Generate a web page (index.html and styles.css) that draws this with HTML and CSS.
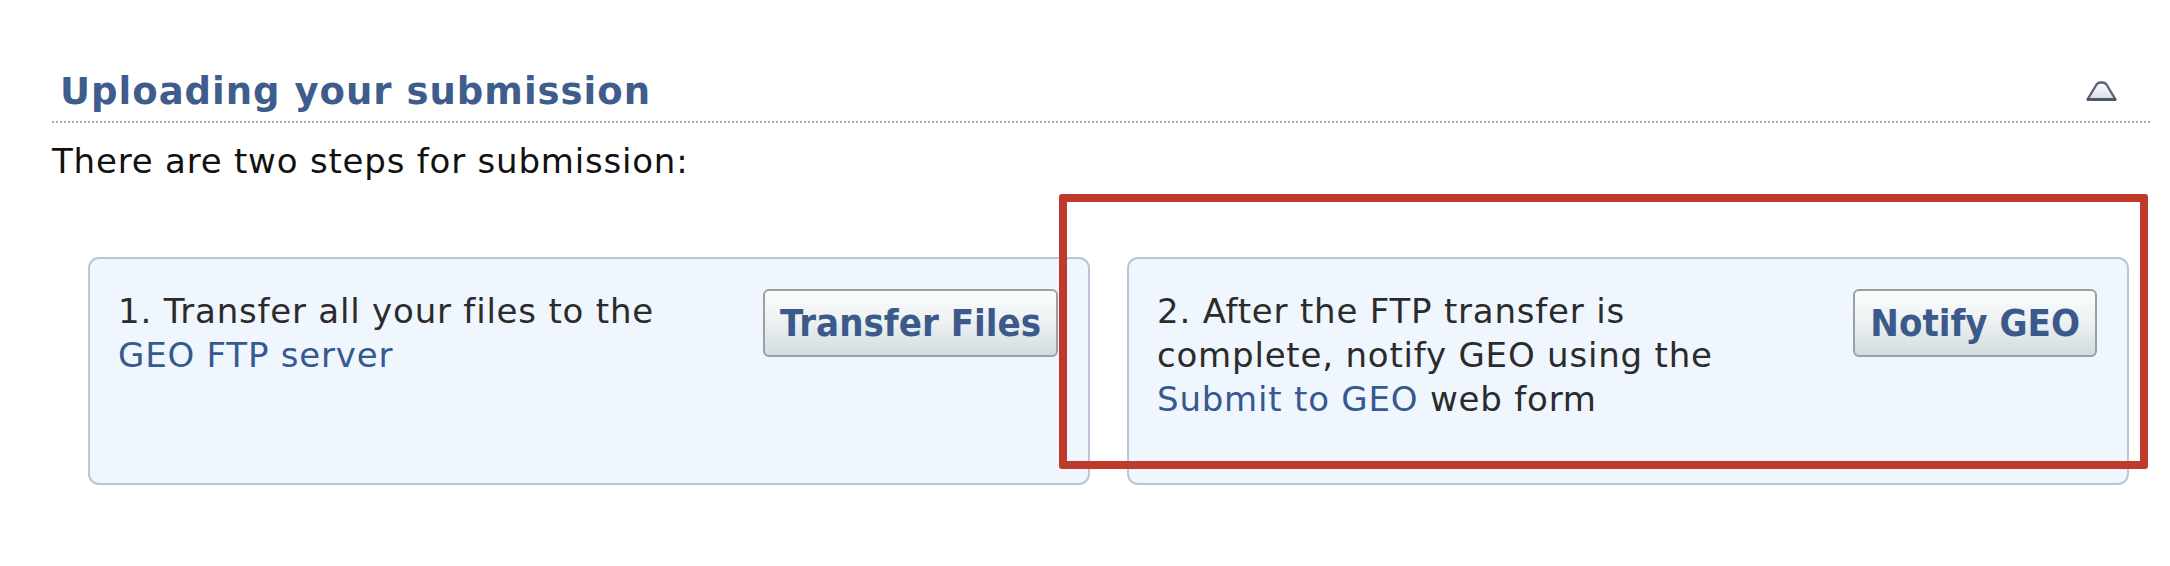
FILE: index.html
```html
<!DOCTYPE html>
<html>
<head>
<meta charset="utf-8">
<link rel="stylesheet" href="styles.css">
</head>
<body>
<div class="page">
  <div class="section-head">
    <h2 class="section-title">Uploading your submission</h2>
    <span class="collapse-icon" aria-hidden="true">
      <svg width="32" height="22" viewBox="0 0 32 22">
        <defs>
          <linearGradient id="tg" x1="0" y1="0" x2="0" y2="1">
            <stop offset="0" stop-color="#ffffff"/>
            <stop offset="1" stop-color="#d6dde8"/>
          </linearGradient>
        </defs>
        <path d="M2.5 19.5 L11.5 4.5 Q13 2.5 15.5 2.5 L17.5 2.5 Q20 2.5 21.5 4.5 L30.5 19.5 Z" fill="url(#tg)" stroke="#5b6475" stroke-width="2.4" stroke-linejoin="round"/>
        <line x1="2" y1="19.5" x2="31" y2="19.5" stroke="#4a5263" stroke-width="2.6"/>
      </svg>
    </span>
  </div>
  <p class="intro">There are two steps for submission:</p>
  <div class="steps">
    <div class="step">
      <div class="step-text">1. Transfer all your files to the <a class="link" href="#">GEO FTP server</a></div>
      <button class="step-btn" type="button">Transfer Files</button>
    </div>
    <div class="step">
      <div class="step-text">2. After the FTP transfer is complete, notify GEO using the <a class="link" href="#">Submit to GEO</a> web form</div>
      <button class="step-btn" type="button">Notify GEO</button>
    </div>
    <div class="highlight"></div>
  </div>
</div>
</body>
</html>
```

FILE: styles.css
```css
html, body {
  margin: 0;
  padding: 0;
  background: #ffffff;
}

body {
  font-family: "DejaVu Sans", Verdana, sans-serif;
  color: #1a1a1a;
}

.page {
  padding: 70px 20px 0 52px;
}

.section-head {
  display: flex;
  justify-content: space-between;
  align-items: flex-start;
  border-bottom: 2px dotted #a9a9a9;
  padding-bottom: 7px;
}

.section-title {
  margin: 0;
  padding-left: 8px;
  font-size: 37px;
  line-height: 44px;
  letter-spacing: 1px;
  font-weight: bold;
  color: #3f5d8c;
}

.collapse-icon {
  display: block;
  margin-top: 10px;
  margin-right: 33px;
  height: 22px;
}

.collapse-icon svg {
  display: block;
}

.intro {
  margin: 16px 0 0 0;
  font-size: 34px;
  line-height: 44px;
  letter-spacing: 0.8px;
  color: #111111;
}

.steps {
  position: relative;
  display: flex;
  gap: 37px;
  margin: 74px 21px 0 36px;
}

.step {
  flex: 1 1 0;
  display: flex;
  justify-content: space-between;
  align-items: flex-start;
  background: #eff6fd;
  border: 2px solid #bac6d7;
  border-radius: 11px;
  padding: 30px 30px 62px 28px;
}

.step-text {
  width: 585px;
  font-size: 34px;
  line-height: 44px;
  letter-spacing: 0.8px;
  color: #2b2b2b;
}

.link {
  color: #36598f;
  text-decoration: none;
}

.step-btn {
  flex: 0 0 auto;
  height: 68px;
  padding: 0 15px;
  font-family: "DejaVu Sans Condensed", "DejaVu Sans", Verdana, sans-serif;
  font-stretch: condensed;
  font-size: 38px;
  font-weight: bold;
  color: #3b5a8b;
  background: linear-gradient(#fbfcfc 0%, #eef2f3 45%, #d3dcdf 100%);
  border: 2px solid #9d9fa1;
  border-radius: 6px;
}

.highlight {
  position: absolute;
  box-sizing: border-box;
  left: 971px;
  top: -63px;
  width: 1089px;
  height: 275px;
  border: 8px solid #bf3a2a;
  border-radius: 3px;
  pointer-events: none;
}
```
